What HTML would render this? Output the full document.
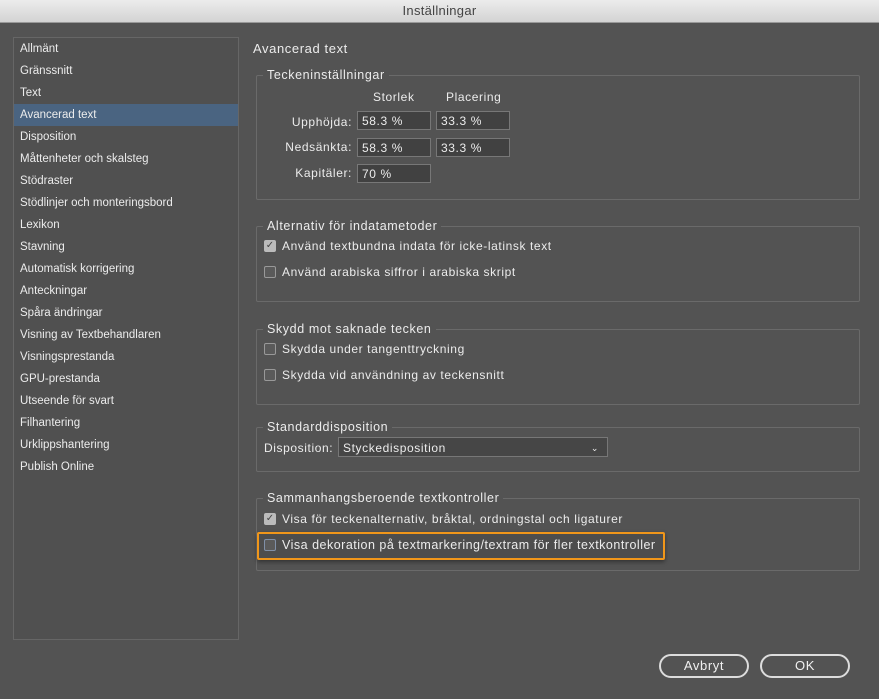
<html><head><style>
body{margin:0;width:879px;height:699px;background:#535353;font-family:"Liberation Sans",sans-serif;font-size:12px;letter-spacing:0.6px;color:#ececec;position:relative;overflow:hidden}
.a{position:absolute;white-space:nowrap}
.title{left:0;top:0;width:879px;height:22px;background:linear-gradient(#ececec,#d3d3d3);border-bottom:1px solid #999;color:#444;font-size:13px;text-align:center;line-height:22px;letter-spacing:0.3px}
.side{left:13px;top:37px;width:224px;height:601px;border:1px solid #666;background:#505050}
.side div{height:22px;line-height:22px;padding-left:6px;letter-spacing:0;font-size:11.5px}
.sel{background:#4a6481}
.box{border:1px solid #6a6a6a;border-radius:2px;left:256px;width:602px}
.lg{background:#535353;padding:0 4px;font-size:12.5px}
.in{background:#414141;border:1px solid #777;height:19px;line-height:19px;padding-left:4px;box-sizing:border-box;width:74px}
.cb{width:10px;height:10px;border:1px solid #999;background:#5a5a5a;border-radius:2px;letter-spacing:0}
.ck{background:#bbb;border-color:#bbb;color:#444;font-size:10px;line-height:10px;text-align:center}
.btn{border:2px solid #ddd;border-radius:12px;height:20px;line-height:20px;text-align:center;font-size:13px;color:#f0f0f0}
.lb{width:100px;text-align:right}
</style></head><body>
<div class="a title">Inställningar</div>
<div class="a side">
<div>Allmänt</div><div>Gränssnitt</div><div>Text</div><div class="sel">Avancerad text</div><div>Disposition</div><div>Måttenheter och skalsteg</div><div>Stödraster</div><div>Stödlinjer och monteringsbord</div><div>Lexikon</div><div>Stavning</div><div>Automatisk korrigering</div><div>Anteckningar</div><div>Spåra ändringar</div><div>Visning av Textbehandlaren</div><div>Visningsprestanda</div><div>GPU-prestanda</div><div>Utseende för svart</div><div>Filhantering</div><div>Urklippshantering</div><div>Publish Online</div>
</div>
<div class="a" style="left:253px;top:41px;font-size:13px">Avancerad text</div>

<div class="a box" style="top:75px;height:123px"></div>
<div class="a lg" style="left:263px;top:68px">Teckeninställningar</div>
<div class="a" style="left:373px;top:90px">Storlek</div>
<div class="a" style="left:446px;top:90px">Placering</div>
<div class="a lb" style="left:252px;top:115px">Upphöjda:</div>
<div class="a in" style="left:357px;top:111px">58.3 %</div>
<div class="a in" style="left:436px;top:111px">33.3 %</div>
<div class="a lb" style="left:252px;top:140px">Nedsänkta:</div>
<div class="a in" style="left:357px;top:138px">58.3 %</div>
<div class="a in" style="left:436px;top:138px">33.3 %</div>
<div class="a lb" style="left:252px;top:166px">Kapitäler:</div>
<div class="a in" style="left:357px;top:164px">70 %</div>

<div class="a box" style="top:226px;height:74px"></div>
<div class="a lg" style="left:263px;top:219px">Alternativ för indatametoder</div>
<div class="a cb ck" style="left:264px;top:240px">✓</div><div class="a" style="left:282px;top:239px">Använd textbundna indata för icke-latinsk text</div>
<div class="a cb" style="left:264px;top:266px"></div><div class="a" style="left:282px;top:265px">Använd arabiska siffror i arabiska skript</div>

<div class="a box" style="top:329px;height:74px"></div>
<div class="a lg" style="left:263px;top:322px">Skydd mot saknade tecken</div>
<div class="a cb" style="left:264px;top:343px"></div><div class="a" style="left:282px;top:342px">Skydda under tangenttryckning</div>
<div class="a cb" style="left:264px;top:369px"></div><div class="a" style="left:282px;top:368px">Skydda vid användning av teckensnitt</div>

<div class="a box" style="top:427px;height:43px"></div>
<div class="a lg" style="left:263px;top:420px">Standarddisposition</div>
<div class="a" style="left:264px;top:441px">Disposition:</div>
<div class="a in" style="left:338px;top:437px;width:270px;height:20px;line-height:20px;background:#464646">Styckedisposition<span style="position:absolute;right:8px;font-size:9px">⌄</span></div>

<div class="a box" style="top:498px;height:71px"></div>
<div class="a lg" style="left:263px;top:491px">Sammanhangsberoende textkontroller</div>
<div class="a cb ck" style="left:264px;top:513px">✓</div><div class="a" style="left:282px;top:512px">Visa för teckenalternativ, bråktal, ordningstal och ligaturer</div>
<div class="a" style="left:257px;top:532px;width:404px;height:24px;border:2px solid #f0961a;border-radius:2px;background:#4d4d4d;box-shadow:0 2px 4px rgba(0,0,0,.4)"></div>
<div class="a cb" style="left:264px;top:539px;border-color:#8090a8"></div><div class="a" style="left:282px;top:538px;font-size:12.5px;letter-spacing:0.5px">Visa dekoration på textmarkering/textram för fler textkontroller</div>

<div class="a btn" style="left:659px;top:654px;width:86px">Avbryt</div>
<div class="a btn" style="left:760px;top:654px;width:86px">OK</div>
</body></html>
